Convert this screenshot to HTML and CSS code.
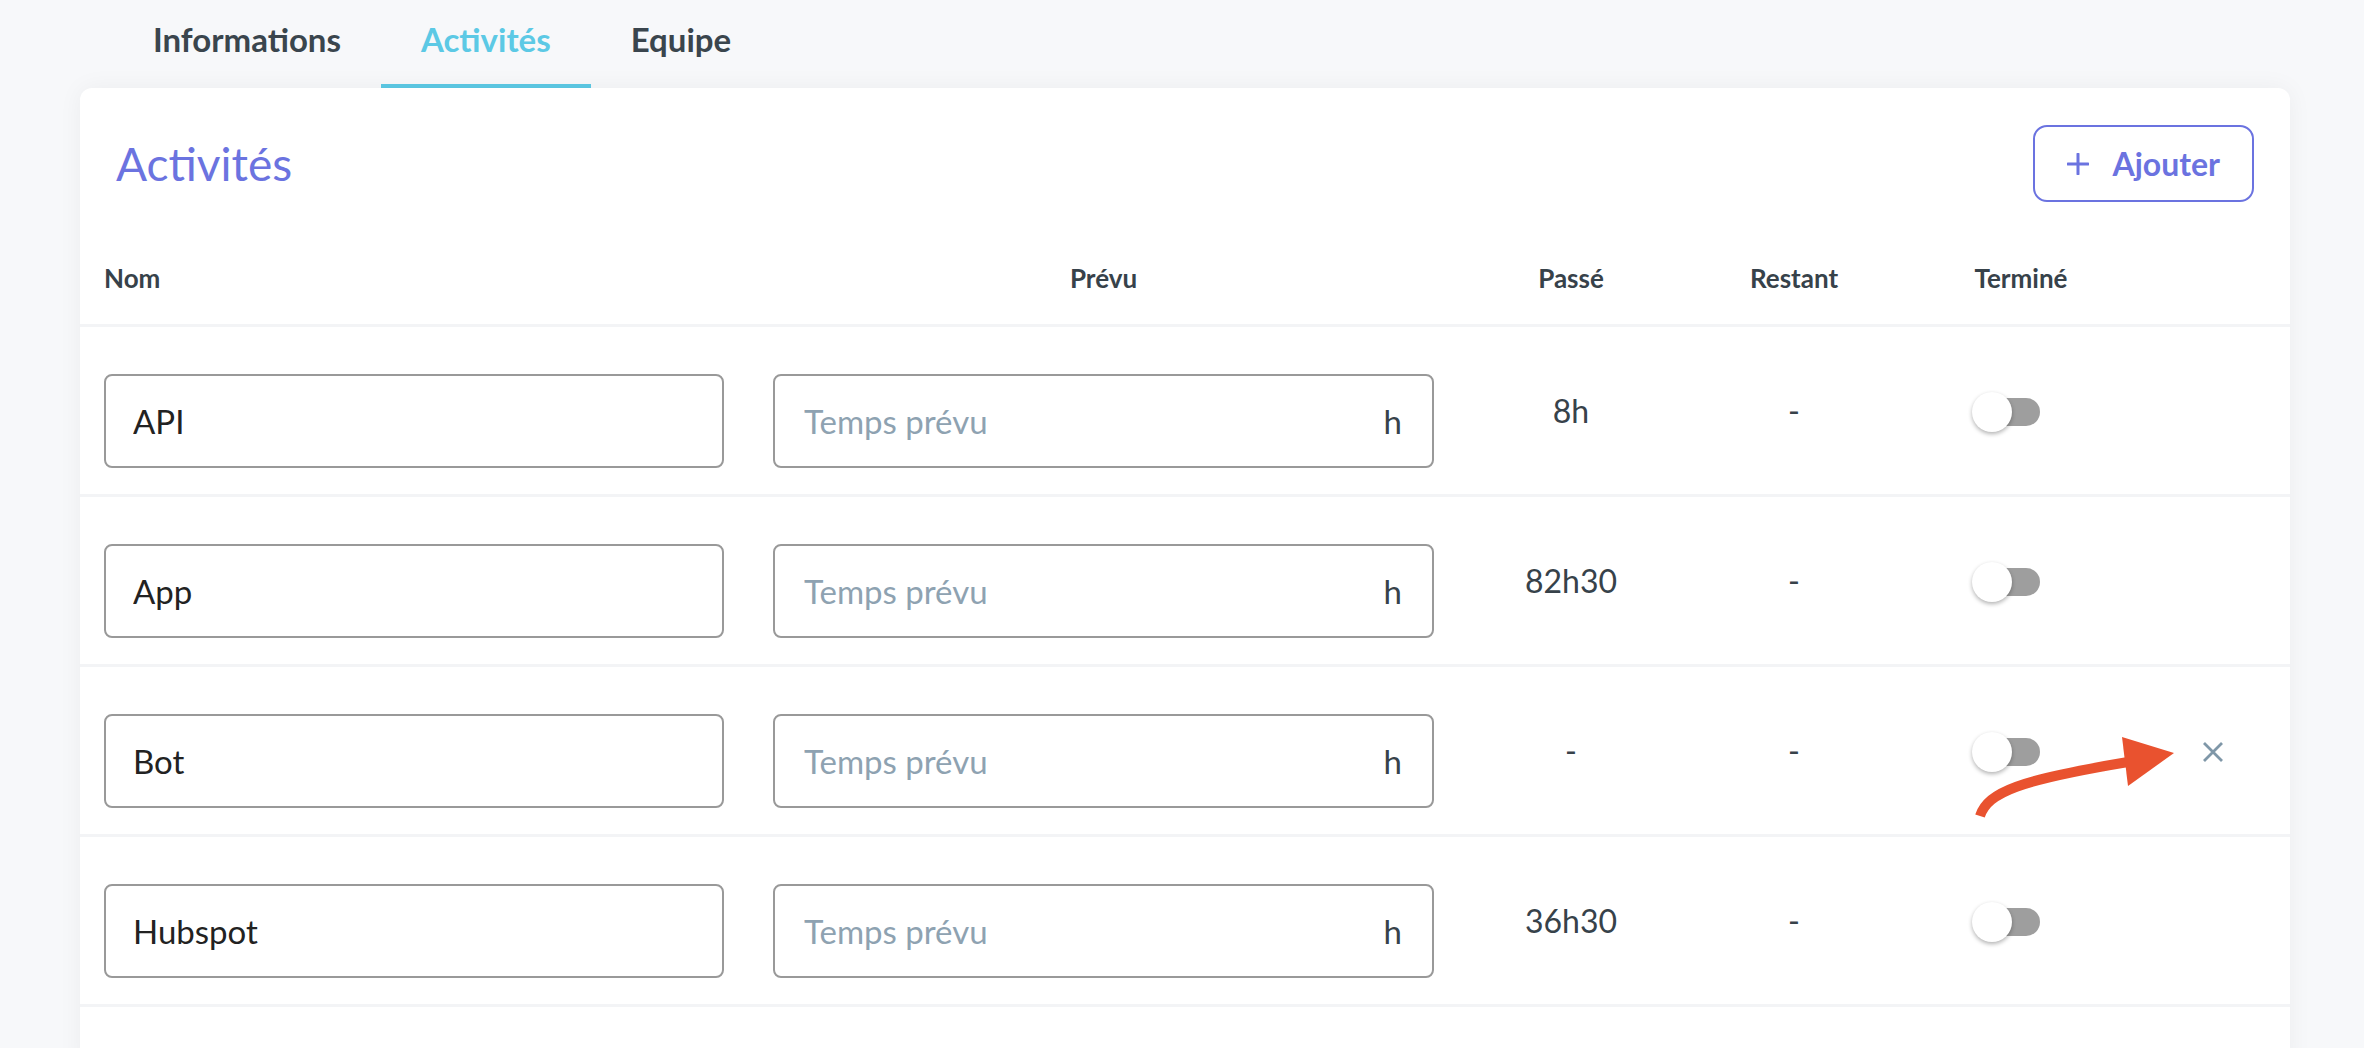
FILE: index.html
```html
<!DOCTYPE html>
<html lang="fr">
<head>
  <meta charset="UTF-8">
  <meta name="viewport" content="width=device-width, initial-scale=1.0">
  <title>Projet - Activités</title>
  <link rel="stylesheet" href="styles.css">
</head>
<body>
  <div class="page">
    <nav class="tabs">
      <a class="tab">Informations</a>
      <a class="tab active">Activités</a>
      <a class="tab">Equipe</a>
    </nav>

    <section class="card">
      <header class="card-head">
        <h2 class="card-title">Activités</h2>
        <button class="btn-add">
          <svg width="22" height="22" viewBox="0 0 22 22"><path d="M11 1v20M1 11h20" stroke="currentColor" stroke-width="3" stroke-linecap="round"/></svg>
          Ajouter
        </button>
      </header>

      <div class="table">
        <div class="row head">
          <div>Nom</div>
          <div class="c">Prévu</div>
          <div class="c">Passé</div>
          <div class="c">Restant</div>
          <div class="c">Terminé</div>
          <div></div>
        </div>

        <div class="row">
          <input class="field" type="text" value="API">
          <div class="field time"><input type="text" placeholder="Temps prévu"><span>h</span></div>
          <div class="c">8h</div>
          <div class="c">-</div>
          <div class="c"><span class="switch"><span class="track"></span><span class="thumb"></span></span></div>
          <div></div>
        </div>

        <div class="row">
          <input class="field" type="text" value="App">
          <div class="field time"><input type="text" placeholder="Temps prévu"><span>h</span></div>
          <div class="c">82h30</div>
          <div class="c">-</div>
          <div class="c"><span class="switch"><span class="track"></span><span class="thumb"></span></span></div>
          <div></div>
        </div>

        <div class="row hover">
          <input class="field" type="text" value="Bot">
          <div class="field time"><input type="text" placeholder="Temps prévu"><span>h</span></div>
          <div class="c">-</div>
          <div class="c">-</div>
          <div class="c"><span class="switch"><span class="track"></span><span class="thumb"></span></span></div>
          <div class="c">
            <button class="btn-remove">
              <svg width="22" height="22" viewBox="0 0 22 22"><path d="M2 2l18 18M20 2L2 20" stroke="currentColor" stroke-width="2.8"/></svg>
            </button>
          </div>
          <svg class="pointer" width="230" height="110" viewBox="0 0 230 110">
            <path d="M20 96C28 72 60 60 168 42" fill="none" stroke="#e9522f" stroke-width="10"/>
            <path d="M162 17L214 33L168 66Z" fill="#e9522f"/>
          </svg>
        </div>

        <div class="row">
          <input class="field" type="text" value="Hubspot">
          <div class="field time"><input type="text" placeholder="Temps prévu"><span>h</span></div>
          <div class="c">36h30</div>
          <div class="c">-</div>
          <div class="c"><span class="switch"><span class="track"></span><span class="thumb"></span></span></div>
          <div></div>
        </div>
      </div>
    </section>
  </div>
</body>
</html>
```

FILE: styles.css
```css
body {
  margin: 0;
  font-family: Lato, "Open Sans", sans-serif;
  background-color: #f7f8fa;
  color: #37424a;
}

.page {
  padding: 0 74px 0 80px;
}

/* onglets */
.tabs {
  display: flex;
  margin-left: 33px;
}

.tab {
  padding: 19px 40px 25px;
  line-height: 40px;
  font-size: 33px;
  font-weight: bold;
  color: #3a454d;
  border-bottom: 4px solid transparent;
  cursor: pointer;
}

.tab.active {
  color: #5cc9e5;
  border-bottom-color: #5cc9e5;
}

/* carte */
.card {
  position: relative;
  background-color: #fff;
  border-radius: 12px 12px 0 0;
  box-shadow: 0 0 24px rgba(0, 0, 0, 0.05);
  padding-bottom: 60px;
}

.card-head {
  display: flex;
  justify-content: space-between;
  align-items: center;
  padding: 37px 36px 0;
}

.card-title {
  margin: 0;
  font-size: 46px;
  font-weight: normal;
  color: #6b73e0;
}

.btn-add {
  display: inline-flex;
  align-items: center;
  gap: 23px;
  height: 77px;
  padding: 0 32px;
  font-family: inherit;
  font-size: 32px;
  font-weight: bold;
  color: #6b73e0;
  background: #fff;
  border: 2px solid #6b73e0;
  border-radius: 14px;
  cursor: pointer;
}

/* tableau */
.row {
  position: relative;
  display: grid;
  grid-template-columns: 620px 661px 176px 172px 184px 1fr;
  column-gap: 49px;
  align-items: center;
  height: 170px;
  box-sizing: border-box;
  padding: 0 26px 0 24px;
  border-bottom: 3px solid #f3f4f6;
  font-size: 32px;
}

.row.head {
  height: auto;
  padding-top: 61px;
  padding-bottom: 31px;
  font-size: 26px;
  line-height: 30px;
  font-weight: bold;
}

.c {
  text-align: center;
}

.field {
  box-sizing: border-box;
  height: 94px;
  margin-top: 20px;
  padding: 0 27px;
  font-family: inherit;
  font-size: 33px;
  color: #222;
  border: 2px solid #999;
  border-radius: 8px;
  outline: none;
}

.field.time {
  display: flex;
  align-items: center;
  padding: 0 30px 0 29px;
}

.field.time input {
  flex: 1;
  min-width: 0;
  padding: 0;
  border: none;
  outline: none;
  font-family: inherit;
  font-size: 33px;
  color: #222;
}

.field.time input::placeholder {
  color: #8ea2b1;
}

.field.time span {
  color: #37424a;
}

/* interrupteur */
.switch {
  position: relative;
  display: inline-block;
  width: 98px;
  height: 40px;
  vertical-align: middle;
}

.switch .track {
  position: absolute;
  left: 4px;
  top: 6px;
  width: 64px;
  height: 28px;
  border-radius: 14px;
  background-color: #9e9e9e;
}

.switch .thumb {
  position: absolute;
  left: 0;
  top: 0;
  width: 40px;
  height: 40px;
  border-radius: 50%;
  background-color: #fff;
  box-shadow: 0 2px 4px rgba(0, 0, 0, 0.3);
}

.btn-remove {
  display: inline-flex;
  padding: 0;
  border: none;
  background: none;
  color: #7f97a8;
  cursor: pointer;
}

/* flèche d'annotation */
.pointer {
  position: absolute;
  left: 1880px;
  top: 53px;
}
```
